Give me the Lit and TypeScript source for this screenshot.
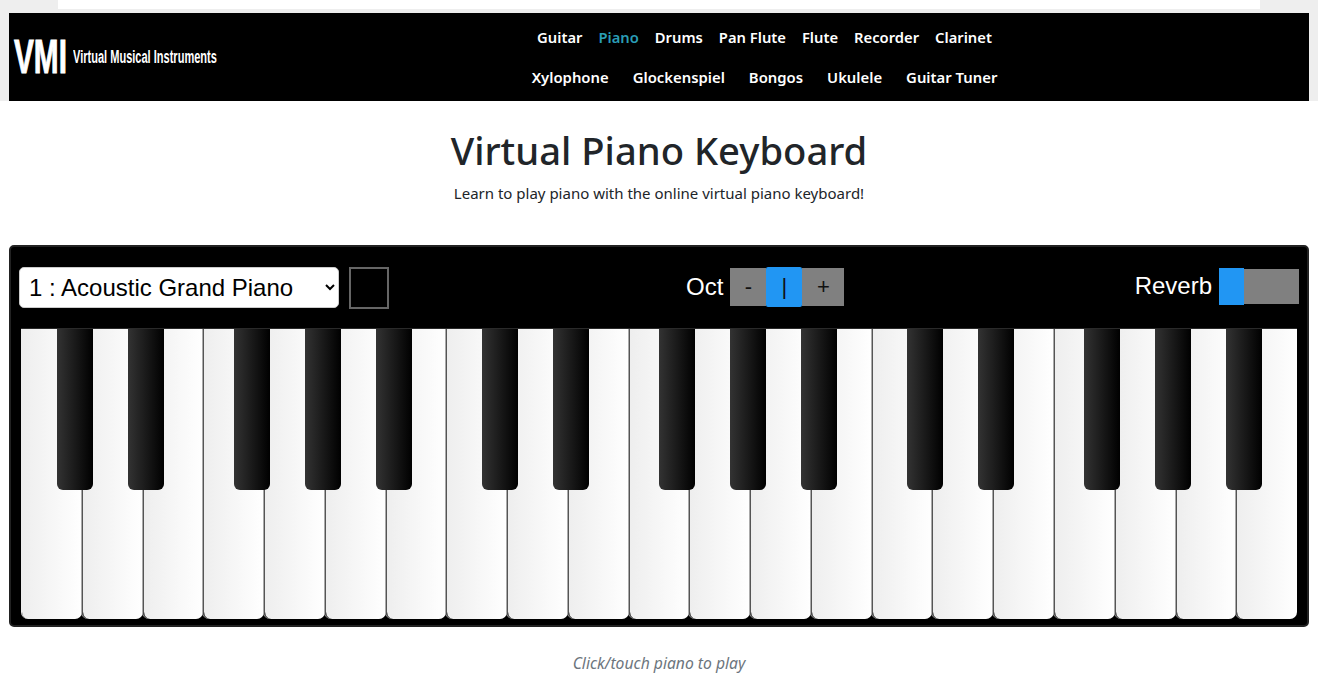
import { LitElement, html, css } from "lit";
import { customElement } from "lit/decorators.js";

const NAV1 = ["Guitar", "Piano", "Drums", "Pan Flute", "Flute", "Recorder", "Clarinet"];
const NAV2 = ["Xylophone", "Glockenspiel", "Bongos", "Ukulele", "Guitar Tuner"];
const BLACK_LEFT = [36, 107, 213, 284, 355, 461, 532, 638, 709, 780, 886, 957, 1063, 1134, 1205];

@customElement("app-root")
export class AppRoot extends LitElement {
  static styles = css`
    :host { display: block; background: #fff; font-family: "Noto Sans", "Open Sans", sans-serif; color: #212529; }
    .top { background: #eeeeee; height: 101px; padding: 0 9px; box-sizing: border-box; display: flex; flex-direction: column; }
    .ad { background: #fff; height: 9px; margin: 0 49px 0 49px; flex: none; }
    .bar { margin-top: 4px; height: 88px; background: #000; display: flex; align-items: center; position: relative; flex: none; }
    .logo { width: 208px; flex: none; margin-left: 5px; display: flex; align-items: center; color: #fff; font-family: "Liberation Sans", Arial, sans-serif; font-weight: 700; white-space: nowrap; }
    .vmi { display: inline-block; font-size: 48px; line-height: 48px; width: 59px; transform: scaleX(0.62); transform-origin: left center; -webkit-text-stroke: 1px #fff; }
    .tag { display: inline-block; font-size: 18px; transform: scaleX(0.613); transform-origin: left center; width: 149px; }
    .nav { flex: 1; display: flex; flex-direction: column; align-items: center; margin-left: 179px; margin-right: 181px; }
    .row { display: flex; height: 40px; align-items: center; white-space: nowrap; font-weight: 600; color: #fff; }
    .r1 { gap: 16px; font-size: 14.75px; }
    .r2 { gap: 24px; font-size: 14.85px; }
    .active { color: #2a9db5; }
    h1 { margin: 26px 0 0; text-align: center; font-size: 38.2px; line-height: 46px; font-weight: 500; }
    .sub { margin: 8px 0 0; text-align: center; font-size: 15px; line-height: 24px; }
    .panel { margin: 40px 9px 0; height: 382px; box-sizing: border-box; background: #000; border: 2px solid #222; border-radius: 5px; padding: 0 10px; display: flex; flex-direction: column; }
    .controls { height: 82px; box-sizing: border-box; padding-bottom: 2px; display: flex; align-items: center; font-family: "Liberation Sans", Arial, sans-serif; color: #fff; font-size: 24px; flex: none; position: relative; }
    select { width: 320px; height: 41px; margin-left: -2px; border-radius: 5px; border: 1px solid #ccc; background: #fff; color: #000; font: 24px "Liberation Sans", Arial, sans-serif; padding: 0 5px; box-sizing: border-box; }
    .sq { width: 40px; height: 42px; margin-left: 10px; margin-top: 2px; box-sizing: border-box; border: 2px solid #666; background: #000; flex: none; }
    .oct { margin-left: 297px; display: flex; align-items: center; }
    .oct-label { margin-right: 7px; }
    .btn { width: 36px; height: 38px; background: #808080; color: #111; display: flex; align-items: center; justify-content: center; font-size: 22px; }
    .btn.on { height: 40px; background: #2196f3; border-radius: 2px; }
    .btn.wide { width: 42px; }
    .rev { margin-left: auto; margin-right: -2px; display: flex; align-items: center; margin-top: -2px; }
    .rev-label { margin-right: 7px; }
    .slider { width: 80px; height: 35px; background: #808080; flex: none; position: relative; }
    .thumb { position: absolute; left: 0; top: -1px; bottom: -1px; width: 25px; background: #2196f3; }
    .keys { position: relative; height: 290px; display: flex; flex: none; box-shadow: 0 -1px 0 #2a2a2a; }
    .w { flex: 1; background: linear-gradient(to right, #eee, #fff); background-clip: padding-box; border-radius: 0 0 7px 7px; border-left: 1px solid #555; box-sizing: border-box; box-shadow: -1px 0 0 #aaa; }
    .w:first-child { border-left-color: #eee; box-shadow: none; }
    .b { position: absolute; top: 0; width: 36px; height: 161px; border-radius: 0 0 6px 6px; background: linear-gradient(to right, #333, #000); }
    .hint { margin: 25px 0 0; text-align: center; font-style: italic; font-size: 15.7px; line-height: 22px; color: #6c757d; }
  `;

  render() {
    return html`
      <div class="top">
        <div class="ad"></div>
        <div class="bar">
          <div class="logo"><span class="vmi">VMI</span><span class="tag">Virtual Musical Instruments</span></div>
          <nav class="nav">
            <div class="row r1">${NAV1.map((n) => html`<span class=${n === "Piano" ? "active" : ""}>${n}</span>`)}</div>
            <div class="row r2">${NAV2.map((n) => html`<span>${n}</span>`)}</div>
          </nav>
        </div>
      </div>
      <h1>Virtual Piano Keyboard</h1>
      <p class="sub">Learn to play piano with the online virtual piano keyboard!</p>
      <section class="panel">
        <div class="controls">
          <select><option>1 : Acoustic Grand Piano</option></select>
          <div class="sq"></div>
          <div class="oct">
            <span class="oct-label">Oct</span>
            <span class="btn">-</span><span class="btn on">|</span><span class="btn wide">+</span>
          </div>
          <div class="rev">
            <span class="rev-label">Reverb</span>
            <div class="slider"><div class="thumb"></div></div>
          </div>
        </div>
        <div class="keys">
          ${Array.from({ length: 21 }, () => html`<div class="w"></div>`)}
          ${BLACK_LEFT.map((l) => html`<div class="b" style="left:${l}px"></div>`)}
        </div>
      </section>
      <p class="hint">Click/touch piano to play</p>
    `;
  }
}
